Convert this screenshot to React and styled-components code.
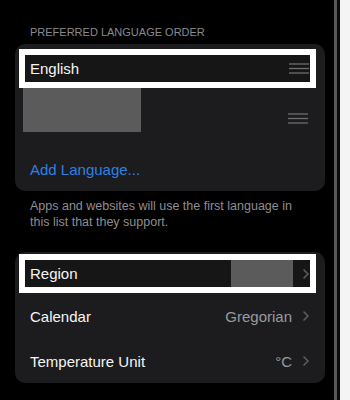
import React from "react";
import styled, { createGlobalStyle } from "styled-components";

const GlobalStyle = createGlobalStyle`
  html, body {
    margin: 0;
    padding: 0;
    background: #000;
  }
  body {
    font-family: "Liberation Sans", Arial, sans-serif;
    -webkit-font-smoothing: antialiased;
  }
`;

const Frame = styled.div`
  display: flex;
  width: 350px;
  height: 400px;
  overflow: hidden;
`;

const Screen = styled.div`
  width: 334px;
  flex-shrink: 0;
  background: #000;
  padding-top: 25px;
  box-sizing: border-box;
`;

const Bezel = styled.div`
  width: 3px;
  flex-shrink: 0;
  background: #575757;
`;

const BezelGap = styled.div`
  width: 3px;
  flex-shrink: 0;
  background: #0a0a0a;
`;

const Outside = styled.div`
  flex: 1;
  background: #f4f4f4;
`;

const SectionHeader = styled.div`
  padding-left: 30px;
  font-size: 11px;
  line-height: 14px;
  color: #8a8a8e;
`;

const Card = styled.div`
  display: flow-root;
  margin: ${(p) => p.$top}px 9px 0 15px;
  background: #1c1c1e;
  border-radius: 10px;
`;

const HighlightRow = styled.div`
  display: flex;
  align-items: center;
  margin: ${(p) => p.$top}px 9px 0 4px;
  height: 27px;
  border: 6px solid #fff;
  background: #161616;
  padding: 0 1px 0 5px;
`;

const Label = styled.span`
  flex: 1;
  font-size: 15px;
  color: #f5f5f5;
`;

const Hamburger = styled.svg`
  display: block;
  flex-shrink: 0;
`;

const LangRow = styled.div`
  display: flex;
  justify-content: space-between;
  align-items: flex-start;
  height: 54px;
`;

const Redaction = styled.div`
  width: ${(p) => p.$w}px;
  height: ${(p) => p.$h}px;
  margin-left: ${(p) => p.$left || 0}px;
  margin-right: ${(p) => p.$right || 0}px;
  background: #5b5b5b;
  flex-shrink: 0;
`;

const HandleWrap = styled.div`
  margin-top: 25px;
  margin-right: 17px;
`;

const AddRow = styled.div`
  height: 49px;
  display: flex;
  align-items: center;
  padding: 6px 0 0 15px;
  box-sizing: border-box;
  color: #2f80e4;
  font-size: 15px;
`;

const Footer = styled.p`
  margin: 7px 0 0;
  padding: 0 30px 0 30px;
  font-size: 12.5px;
  line-height: 16px;
  color: #8d8d92;
`;

const SettingRow = styled.div`
  display: flex;
  align-items: center;
  height: ${(p) => p.$h}px;
  padding: 0 16px 0 15px;
`;

const Value = styled.span`
  font-size: 15px;
  color: #9a9a9f;
  margin-right: 11px;
`;

const Handle = () => (
  <Hamburger width="20" height="11" viewBox="0 0 20 11">
    <g stroke="#6f6f72" strokeWidth="1.3">
      <line x1="0" y1="1" x2="20" y2="1" />
      <line x1="0" y1="5.5" x2="20" y2="5.5" />
      <line x1="0" y1="10" x2="20" y2="10" />
    </g>
  </Hamburger>
);

const Chevron = () => (
  <svg width="6" height="10" viewBox="0 0 6 10" style={{ display: "block", flexShrink: 0 }}>
    <polyline
      points="1,1 5,5 1,9"
      fill="none"
      stroke="#5e5e62"
      strokeWidth="1.6"
      strokeLinecap="round"
      strokeLinejoin="round"
    />
  </svg>
);

export default function App() {
  return (
    <>
      <GlobalStyle />
      <Frame>
        <Screen>
          <SectionHeader>PREFERRED LANGUAGE ORDER</SectionHeader>
          <Card $top={5}>
            <HighlightRow $top={5}>
              <Label>English</Label>
              <Handle />
            </HighlightRow>
            <LangRow>
              <Redaction $w={118} $h={44} $left={8} />
              <HandleWrap>
                <Handle />
              </HandleWrap>
            </LangRow>
            <AddRow>Add Language...</AddRow>
          </Card>
          <Footer>
            Apps and websites will use the first language in this list that they support.
          </Footer>
          <Card $top={22}>
            <HighlightRow $top={2}>
              <Label>Region</Label>
              <Redaction $w={62} $h={27} $right={10} />
              <Chevron />
            </HighlightRow>
            <SettingRow $h={46}>
              <Label>Calendar</Label>
              <Value>Gregorian</Value>
              <Chevron />
            </SettingRow>
            <SettingRow $h={44}>
              <Label>Temperature Unit</Label>
              <Value>°C</Value>
              <Chevron />
            </SettingRow>
          </Card>
        </Screen>
        <Bezel />
        <BezelGap />
        <Outside />
      </Frame>
    </>
  );
}
